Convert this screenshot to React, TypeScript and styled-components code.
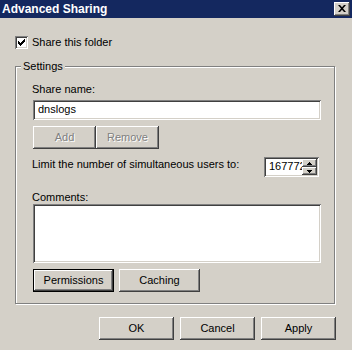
import React from "react";
import styled, { createGlobalStyle, css } from "styled-components";

const GlobalStyle = createGlobalStyle`
  html, body {
    margin: 0;
    padding: 0;
    background: #d4d0c8;
    overflow: hidden;
  }
  * {
    box-sizing: border-box;
  }
`;

const raised = css`
  box-shadow: inset -1px -1px 0 #404040, inset 1px 1px 0 #ffffff,
    inset -2px -2px 0 #808080, inset 2px 2px 0 #d4d0c8;
`;

const sunken = css`
  box-shadow: inset 1px 1px 0 #808080, inset -1px -1px 0 #ffffff,
    inset 2px 2px 0 #404040, inset -2px -2px 0 #d4d0c8;
`;

const Window = styled.div`
  width: 352px;
  height: 350px;
  background: #d4d0c8;
  display: flex;
  flex-direction: column;
  font-family: "Liberation Sans", Arial, sans-serif;
  font-size: 11px;
  line-height: 13px;
  color: #000;
`;

const TitleBar = styled.div`
  height: 18px;
  flex-shrink: 0;
  background: #14285f;
  display: flex;
  align-items: center;
  justify-content: space-between;
  padding: 0 2px 0 2px;
`;

const Title = styled.div`
  color: #fff;
  font-weight: 700;
  font-size: 12px;
  line-height: 14px;
`;

const CloseButton = styled.div`
  width: 16px;
  height: 14px;
  background: #d4d0c8;
  ${raised};
  display: flex;
  align-items: center;
  justify-content: center;
  padding-bottom: 1px;
`;

const Body = styled.div`
  display: flex;
  flex-direction: column;
  padding: 18px 16px 0 15px;
`;

const CheckRow = styled.label`
  display: flex;
  align-items: center;
  gap: 4px;
  height: 13px;
`;

const CheckBox = styled.div`
  width: 13px;
  height: 13px;
  background: #fff;
  ${sunken};
  display: flex;
  align-items: center;
  justify-content: center;
`;

const Group = styled.div`
  position: relative;
  margin-top: 17px;
  width: 320px;
  height: 238px;
  border: 1px solid #808080;
  box-shadow: 1px 1px 0 #ffffff, inset 1px 1px 0 #ffffff;
  padding: 16px 13px 0 17px;
  display: flex;
  flex-direction: column;
`;

const Legend = styled.span`
  position: absolute;
  top: -7px;
  left: 5px;
  padding: 0 2px 0 2px;
  background: #d4d0c8;
`;

const Label = styled.div<{ $gap?: number }>`
  margin-top: ${(p) => p.$gap ?? 0}px;
  margin-left: -1px;
  height: 13px;
  white-space: nowrap;
`;

const TextField = styled.div`
  margin-top: 4px;
  width: 288px;
  height: 20px;
  background: #fff;
  ${sunken};
  padding: 3px 4px 0 5px;
`;

const TextArea = styled.div`
  width: 288px;
  height: 59px;
  background: #fff;
  ${sunken};
`;

const ButtonRow = styled.div<{ $gap: number; $top: number }>`
  display: flex;
  gap: ${(p) => p.$gap}px;
  margin-top: ${(p) => p.$top}px;
`;

const Button = styled.div<{ $w: number; $disabled?: boolean; $default?: boolean }>`
  width: ${(p) => p.$w}px;
  height: 23px;
  background: #d4d0c8;
  display: flex;
  align-items: center;
  justify-content: center;
  ${raised};
  ${(p) =>
    p.$disabled &&
    css`
      color: #808080;
      text-shadow: 1px 1px 0 #ffffff;
    `}
  ${(p) =>
    p.$default &&
    css`
      border: 1px solid #000;
      box-shadow: inset -1px -1px 0 #404040, inset 1px 1px 0 #ffffff,
        inset -2px -2px 0 #808080;
    `}
`;

const LimitRow = styled.div`
  margin-top: 8px;
  width: 288px;
  display: flex;
  justify-content: space-between;
  align-items: flex-start;
`;

const LimitLabel = styled.div`
  margin-top: 1px;
  margin-left: -1px;
`;

const Spin = styled.div`
  margin-right: 2px;
  width: 55px;
  height: 20px;
  background: #fff;
  ${sunken};
  display: flex;
  padding: 2px;
`;

const SpinValue = styled.div`
  flex: 1;
  overflow: hidden;
  white-space: nowrap;
  padding: 1px 0 0 3px;
`;

const SpinButtons = styled.div`
  width: 15px;
  display: flex;
  flex-direction: column;
`;

const SpinButton = styled.div`
  flex: 1;
  background: #d4d0c8;
  ${raised};
  display: flex;
  align-items: center;
  justify-content: center;
`;

const Footer = styled.div`
  display: flex;
  justify-content: flex-end;
  gap: 6px;
  margin-top: 13px;
  padding-right: 16px;
`;

const Arrow = ({ up }: { up?: boolean }) => (
  <svg width="5" height="3" viewBox="0 0 5 3">
    <path d={up ? "M2 0h1v1h1v1h1v1H0V2h1V1h1z" : "M0 0h5v1H4v1H3v1H2V2H1V1H0z"} fill="#000" />
  </svg>
);

export default function App() {
  return (
    <>
      <GlobalStyle />
      <Window>
        <TitleBar>
          <Title>Advanced Sharing</Title>
          <CloseButton>
            <svg width="8" height="7" viewBox="0 0 8 7">
              <path
                d="M0 0h2l2 2.2L6 0h2L5 3.5 8 7H6L4 4.8 2 7H0l3-3.5z"
                fill="#000"
              />
            </svg>
          </CloseButton>
        </TitleBar>
        <Body>
          <CheckRow>
            <CheckBox>
              <svg width="7" height="7" viewBox="0 0 7 7">
                <path d="M0 2h1v1h1v1h1V3h1V2h1V1h1V0h1v3H6v1H5v1H4v1H3v1H2V6H1V5H0z" fill="#000" />
              </svg>
            </CheckBox>
            <span>Share this folder</span>
          </CheckRow>
          <Group>
            <Legend>Settings</Legend>
            <Label>Share name:</Label>
            <TextField>dnslogs</TextField>
            <ButtonRow $gap={0} $top={6}>
              <Button $w={63} $disabled>
                Add
              </Button>
              <Button $w={63} $disabled>
                Remove
              </Button>
            </ButtonRow>
            <LimitRow>
              <LimitLabel>Limit the number of simultaneous users to:</LimitLabel>
              <Spin>
                <SpinValue>16777216</SpinValue>
                <SpinButtons>
                  <SpinButton>
                    <Arrow up />
                  </SpinButton>
                  <SpinButton>
                    <Arrow />
                  </SpinButton>
                </SpinButtons>
              </Spin>
            </LimitRow>
            <Label $gap={14}>Comments:</Label>
            <TextArea />
            <ButtonRow $gap={5} $top={6}>
              <Button $w={81} $default>
                Permissions
              </Button>
              <Button $w={81}>Caching</Button>
            </ButtonRow>
          </Group>
        </Body>
        <Footer>
          <Button $w={75}>OK</Button>
          <Button $w={75}>Cancel</Button>
          <Button $w={75}>Apply</Button>
        </Footer>
      </Window>
    </>
  );
}
